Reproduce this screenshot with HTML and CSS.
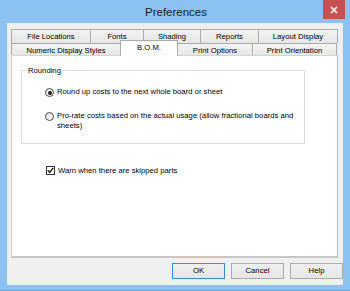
FILE: index.html
```html
<!DOCTYPE html>
<html>
<head>
<meta charset="utf-8">
<link rel="stylesheet" href="styles.css">
</head>
<body>
<div class="window">
  <div class="titlebar">
    <span class="title">Preferences</span>
    <div class="close"><svg width="8" height="8" viewBox="0 0 8 8"><path d="M1 1L7 7M7 1L1 7" stroke="#fff" stroke-width="1.6"/></svg></div>
  </div>
  <div class="client">
    <div class="tabctl">
      <div class="tabrow row1">
        <div class="tab w-fl">File Locations</div>
        <div class="tab w-fo">Fonts</div>
        <div class="tab w-sh">Shading</div>
        <div class="tab w-re">Reports</div>
        <div class="tab w-ld">Layout Display</div>
      </div>
      <div class="tabrow row2">
        <div class="tab w-nd">Numeric Display Styles</div>
        <div class="tab w-bom sel">B.O.M.</div>
        <div class="tab w-po">Print Options</div>
        <div class="tab w-pr">Print Orientation</div>
      </div>
      <div class="panel">
        <div class="group">
          <span class="legend">Rounding</span>
          <div class="opt">
            <span class="radio on"></span>
            <span class="lbl">Round up costs to the next whole board or sheet</span>
          </div>
          <div class="opt opt2">
            <span class="radio"></span>
            <span class="lbl">Pro-rate costs based on the actual usage (allow fractional boards and sheets)</span>
          </div>
        </div>
        <div class="opt chkrow">
          <span class="check"><svg width="7" height="7" viewBox="0 0 7 7"><path d="M0.8 3.4L2.7 5.5L6.2 0.9" fill="none" stroke="#111" stroke-width="1.3"/></svg></span>
          <span class="lbl">Warn when there are skipped parts</span>
        </div>
      </div>
    </div>
    <div class="buttons">
      <div class="btn def">OK</div>
      <div class="btn">Cancel</div>
      <div class="btn">Help</div>
    </div>
  </div>
</div>
</body>
</html>
```
FILE: styles.css
```css
html, body {
  margin: 0;
  padding: 0;
}
body {
  width: 350px;
  height: 291px;
  overflow: hidden;
  font-family: "Liberation Sans", Arial, sans-serif;
  font-size: 7.7px;
  color: #000;
}
.window {
  width: 350px;
  height: 291px;
  box-sizing: border-box;
  background: #8cc2f1;
  border-bottom: 1px solid #6aa6dc;
  padding: 0 7px 5px 7px;
  display: flex;
  flex-direction: column;
}
.titlebar {
  height: 23px;
  position: relative;
  display: flex;
  align-items: center;
  justify-content: center;
}
.title {
  font-size: 11.5px;
  color: #1a1a1a;
  margin-left: 2px;
  margin-top: 1px;
}
.close {
  position: absolute;
  right: -2px;
  top: 0;
  width: 22px;
  height: 19px;
  background: #c75050;
  display: flex;
  align-items: center;
  justify-content: center;
}
.client {
  flex: 1;
  background: #f0f0f0;
  border: 1px solid #e8eef5;
  padding: 5px 4px 0 3px;
  display: flex;
  flex-direction: column;
}
.tabctl {
  width: 327px;
  display: flex;
  flex-direction: column;
}
.tabrow {
  display: flex;
  height: 13px;
}
.row1 { height: 14px; }
.tab {
  box-sizing: border-box;
  border: 1px solid #acacac;
  border-bottom: none;
  border-right: none;
  background: linear-gradient(#f2f2f2, #e6e6e6);
  display: flex;
  align-items: center;
  justify-content: center;
  line-height: 1;
  padding-top: 1px;
}
.tab:last-child { border-right: 1px solid #acacac; }
.w-fl { width: 79px; }
.w-fo { width: 53px; }
.w-sh { width: 57px; }
.w-re { width: 58px; }
.w-ld { width: 80px; }
.w-nd { width: 109px; }
.w-bom { width: 58px; }
.w-po { width: 75px; }
.w-pr { width: 85px; }
.row2 .tab { height: 13px; }
.tab.sel {
  position: relative;
  z-index: 2;
  background: #fff;
  height: 16px;
  margin-top: -3px;
  border-right: 1px solid #acacac;
  margin-right: -1px;
  align-items: flex-start;
  padding-top: 3px;
}
.panel {
  position: relative;
  z-index: 1;
  height: 203px;
  box-sizing: border-box;
  background: #fff;
  border: 1px solid #d4d4d4;
  border-right-color: #b8b8b8;
  border-bottom: 2px solid #c8c8c8;
  margin-top: -1px;
  padding: 14px 0 0 9px;
  display: flex;
  flex-direction: column;
}
.group {
  position: relative;
  width: 284px;
  height: 74px;
  box-sizing: border-box;
  border: 1px solid #dcdcdc;
  padding: 16px 0 0 23px;
  display: flex;
  flex-direction: column;
}
.legend {
  position: absolute;
  left: 5px;
  top: -5px;
  background: #fff;
  padding: 0 1px;
  line-height: 10px;
}
.opt {
  display: flex;
  align-items: flex-start;
  line-height: 10px;
}
.opt2 {
  margin-top: 14px;
  width: 250px;
}
.radio {
  flex: none;
  width: 9px;
  height: 9px;
  box-sizing: border-box;
  border: 1px solid #4d4d4d;
  border-radius: 50%;
  background: linear-gradient(#ececec, #fafafa);
  margin: 1px 3px 0 0;
  display: flex;
  align-items: center;
  justify-content: center;
}
.radio.on::after {
  content: "";
  width: 4px;
  height: 4px;
  border-radius: 50%;
  background: #1a1a1a;
}
.chkrow {
  margin: 22px 0 0 25px;
}
.check {
  flex: none;
  width: 9px;
  height: 9px;
  box-sizing: border-box;
  border: 1px solid #333;
  background: #fff;
  margin: 0 3px 0 0;
  display: flex;
  align-items: center;
  justify-content: center;
}
.buttons {
  display: flex;
  justify-content: flex-end;
  gap: 6px;
  margin-top: 5px;
  width: 332px;
}
.btn {
  width: 53px;
  height: 16px;
  box-sizing: border-box;
  border: 1px solid #acacac;
  background: linear-gradient(#f0f0f0, #e5e5e5);
  display: flex;
  align-items: center;
  justify-content: center;
  line-height: 1;
}
.btn.def {
  border-color: #3c8ad8;
}
```
